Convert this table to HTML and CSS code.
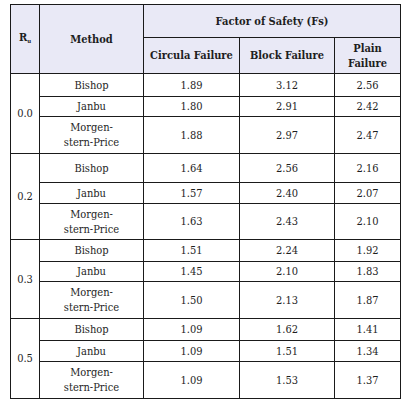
FILE: index.html
```html
<!DOCTYPE html>
<html>
<head>
<meta charset="utf-8">
<link rel="stylesheet" href="styles.css">
</head>
<body>
<table class="fos">
  <colgroup>
    <col class="c-ru"><col class="c-method"><col class="c-circ"><col class="c-block"><col class="c-plain">
  </colgroup>
  <thead>
    <tr class="h1">
      <th rowspan="2">R<sub>u</sub></th>
      <th rowspan="2">Method</th>
      <th colspan="3">Factor of Safety (Fs)</th>
    </tr>
    <tr class="h2">
      <th>Circula Failure</th>
      <th>Block Failure</th>
      <th>Plain<br>Failure</th>
    </tr>
  </thead>
  <tbody>
    <tr class="r-a"><td rowspan="3" class="ru">0.0</td><td>Bishop</td><td>1.89</td><td>3.12</td><td>2.56</td></tr>
    <tr class="r-b"><td>Janbu</td><td>1.80</td><td>2.91</td><td>2.42</td></tr>
    <tr class="r-c"><td>Morgen-<br>stern-Price</td><td>1.88</td><td>2.97</td><td>2.47</td></tr>

    <tr class="r-a tall"><td rowspan="3" class="ru">0.2</td><td>Bishop</td><td>1.64</td><td>2.56</td><td>2.16</td></tr>
    <tr class="r-b wide"><td>Janbu</td><td>1.57</td><td>2.40</td><td>2.07</td></tr>
    <tr class="r-c short"><td>Morgen-<br>stern-Price</td><td>1.63</td><td>2.43</td><td>2.10</td></tr>

    <tr class="r-a mid"><td rowspan="3" class="ru">0.3</td><td>Bishop</td><td>1.51</td><td>2.24</td><td>1.92</td></tr>
    <tr class="r-b"><td>Janbu</td><td>1.45</td><td>2.10</td><td>1.83</td></tr>
    <tr class="r-c"><td>Morgen-<br>stern-Price</td><td>1.50</td><td>2.13</td><td>1.87</td></tr>

    <tr class="r-a mid"><td rowspan="3" class="ru">0.5</td><td>Bishop</td><td>1.09</td><td>1.62</td><td>1.41</td></tr>
    <tr class="r-b wide"><td>Janbu</td><td>1.09</td><td>1.51</td><td>1.34</td></tr>
    <tr class="r-c"><td>Morgen-<br>stern-Price</td><td>1.09</td><td>1.53</td><td>1.37</td></tr>
  </tbody>
</table>
</body>
</html>
```

FILE: styles.css
```css
html, body {
  margin: 0;
  padding: 0;
  background: #ffffff;
}
body {
  padding: 4px 0 0 10px;
}
.fos {
  border-collapse: collapse;
  table-layout: fixed;
  width: 390px;
  font-family: "DejaVu Serif Condensed", "DejaVu Serif", "Liberation Serif", serif;
  font-stretch: condensed;
  font-size: 11px;
  color: #1e1e1e;
}
.c-ru { width: 29px; }
.c-method { width: 104px; }
.c-circ { width: 96px; }
.c-block { width: 95px; }
.c-plain { width: 66px; }
.fos th, .fos td {
  border: 1px solid #1a1a1a;
  text-align: center;
  vertical-align: middle;
  padding: 0 3px;
  line-height: 15px;
}
.fos th {
  background: #e9e9f6;
  font-weight: bold;
}
.fos th sub {
  font-size: 6px;
  vertical-align: -2px;
}
.h1 { height: 33px; }
.h2 { height: 36px; }
.r-a { height: 23px; }
.r-b { height: 20px; }
.r-c { height: 37px; }
.r-a.tall { height: 29px; }
.r-a.mid { height: 22px; }
.r-b.wide { height: 21px; }
.r-c.short { height: 36px; }
.ru {
  text-align: center;
}
```
